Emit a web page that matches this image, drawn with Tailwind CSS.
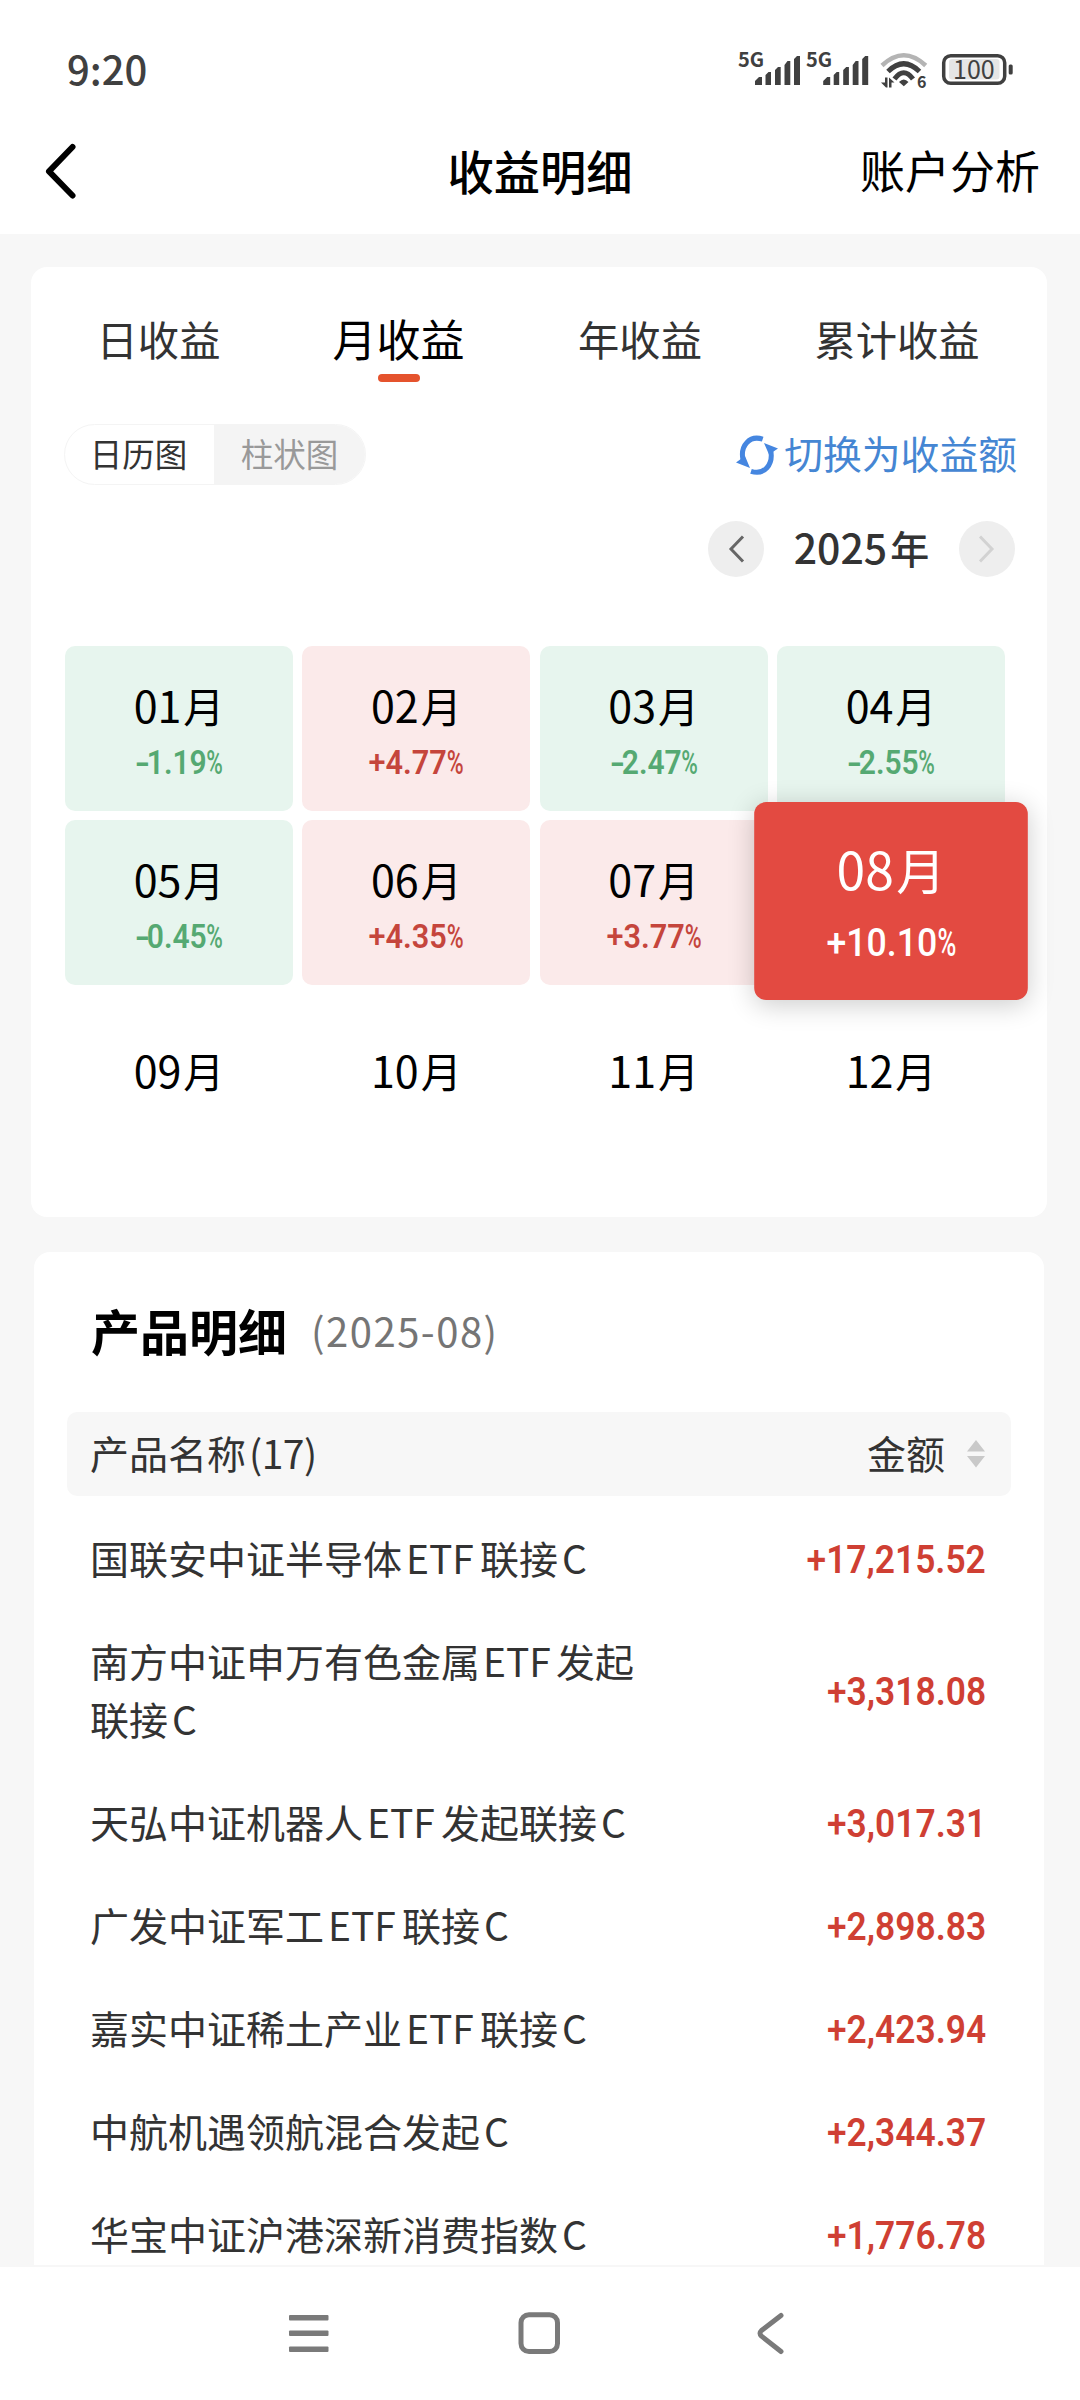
<!DOCTYPE html>
<html lang="zh-CN">

<head>
    <meta charset="UTF-8">
    <meta name="viewport" content="width=device-width, initial-scale=1.0">
    <title>收益明细</title>

    <!-- Include Tailwind CSS -->
    <script src="https://cdn.jsdelivr.net/npm/@tailwindcss/browser@4"></script>
</head>

<body class="w-[1080px] h-[2400px] overflow-hidden bg-[#f7f7f7] flex flex-col text-[#333] font-['Noto_Sans_CJK_SC',sans-serif]">

    <!-- Status Bar -->
    <div class="shrink-0 h-[108px] pt-[32px] pl-[67px] pr-[64px] bg-white flex items-center justify-between text-[#404040]">
        <div class="text-[40px] leading-[60px] font-medium pb-[5px]">9:20</div>
        <svg class="w-[280px] h-[60px] overflow-visible" viewBox="736 40 280 60" fill="#404040">
            <text x="738" y="66.5" font-size="20" font-weight="700" font-family="Noto Sans CJK SC, sans-serif">5G</text>
            <path d="M755 85v-4l4-4h3v8zM765.5 85v-10l3-3h2.5v13zM775 85v-15l3-3h2.7v18zM784.5 85v-20l3-4h2.8v24zM794 85v-26l3-3h3v29z" />
            <text x="806" y="66.5" font-size="20" font-weight="700" font-family="Noto Sans CJK SC, sans-serif">5G</text>
            <path d="M823.2 85v-4l4-4h3v8zM833.7 85v-10l3-3h2.5v13zM843.2 85v-15l3-3h2.7v18zM852.7 85v-20l3-4h2.8v24zM862.2 85v-26l3-3h3v29z" />
            <!-- wifi -->
            <g fill="none">
                <path d="M882 65.500Q903.700 45 925.700 65.500" stroke="#b4b4b4" stroke-width="4.500" />
                <path d="M888 71.500Q903.700 56 919.500 71.500" stroke="#404040" stroke-width="5" />
                <path d="M894.500 79Q903.700 66.500 913 79" stroke="#404040" stroke-width="5" />
            </g>
            <path d="M899 82q4.700-5 9.500 0l-4.700 4.300zM881 82.500h4v-5h2.500v10h-1.500zM889 77.500l5.500 5h-3v5h-2.500z" />
            <text x="917" y="88" font-size="16" font-weight="700" font-family="Noto Sans CJK SC, sans-serif">6</text>
            <!-- battery -->
            <rect x="943.700" y="55.700" width="61" height="27.500" rx="7" fill="none" stroke="#404040" stroke-width="3.500" />
            <rect x="949" y="59" width="50.500" height="20.500" rx="3" fill="#e5e5e5" />
            <text x="953" y="78.700" font-size="25" font-family="Noto Sans CJK SC, sans-serif">100</text>
            <rect x="1008.700" y="64.500" width="4" height="10" rx="1.500" />
        </svg>
    </div>

    <!-- Title Bar -->
    <header class="shrink-0 h-[126px] bg-white grid grid-cols-3 items-center text-black">
        <svg class="ml-[44px] w-[34px] h-[60px]" viewBox="44 141 34 60" fill="none" stroke="#000" stroke-width="6" stroke-linecap="round" stroke-linejoin="round">
            <path d="M72.500 147L49 171.300l23.500 24.200" />
        </svg>
        <h1 class="text-center text-[46.300px] leading-[60px] font-medium pb-[3px]">收益明细</h1>
        <div class="text-right text-[45px] leading-[60px] pr-[40px] pb-[2px]">账户分析</div>
    </header>

    <!-- Profit Calendar -->
    <section class="shrink-0 mt-[33px] ml-[31px] w-[1016px] h-[950px] bg-white rounded-[16px]">
        <!-- Tabs -->
        <div class="flex pl-[9px] pt-[39px] h-[118px] text-[41.300px] leading-[64px] text-center">
            <div class="w-[239px] pr-[2px]">日收益</div>
            <div class="w-[239px] flex flex-col items-center text-[44px] text-black">
                <span>月收益</span>
                <span class="mt-[4px] w-[42px] h-[8px] rounded-full bg-[#e5532d]"></span>
            </div>
            <div class="w-[244px]">年收益</div>
            <div class="w-[270px]">累计收益</div>
        </div>

        <!-- Chart Type + Switch -->
        <div class="flex justify-between items-center mt-[39px] h-[61px] pl-[33px] pr-[30px]">
            <div class="flex w-[302px] h-[61px] rounded-full overflow-hidden border-1 border-[#f4f4f4] text-[32.500px] leading-[55px] text-center">
                <div class="w-[149px] pr-[2px]">日历图</div>
                <div class="flex-1 bg-[#f4f4f4] text-[#999]">柱状图</div>
            </div>
            <div class="flex items-center text-[#4586d3]">
                <svg class="w-[42px] h-[40px] mr-[6px]" viewBox="737 434 42 40" fill="#4586e0">
                    <g fill="none" stroke="#4586e0" stroke-width="5">
                        <path d="M763.700 438.200C751 434 741 444 744 459" />
                        <path d="M752 470.300C765 474.500 775 464 771.500 448" />
                    </g>
                    <path d="M765 442l14 5.500-9 6zM751 467l-14-5.500 9-6.500z" />
                </svg>
                <span class="text-[38.800px] leading-[56px] pb-[6px]">切换为收益额</span>
            </div>
        </div>

        <!-- Year Picker -->
        <div class="flex items-center justify-end mt-[36px] h-[56px] pr-[32px]">
            <button class="w-[56px] h-[56px] rounded-full bg-[#eee] flex items-center justify-center">
                <svg class="w-[18px] h-[28px]" viewBox="0 0 18 28" fill="none" stroke="#666" stroke-width="3">
                    <path d="M16 1.500L4 14l12 12.500" />
                </svg>
            </button>
            <div class="w-[195px] text-center text-[41px] leading-[56px] font-medium pb-[5px]">2025<span class="ml-[3px] text-[39px]">年</span></div>
            <button class="w-[56px] h-[56px] rounded-full bg-[#eee] flex items-center justify-center">
                <svg class="w-[18px] h-[28px]" viewBox="0 0 18 28" fill="none" stroke="#d2d2d2" stroke-width="3">
                    <path d="M2 1.500L14 14 2 26.500" />
                </svg>
            </button>
        </div>

        <!-- Months -->
        <div class="grid grid-cols-4 auto-rows-[165px] gap-x-[9.330px] gap-y-[9px] mt-[69px] ml-[34px] w-[940px] text-center text-black text-[43px] leading-[60px]">
            <div class="rounded-[10px] bg-[#e7f5ee] pt-[28px]">
                <div>01<span class="ml-[2px] text-[41px]">月</span></div>
                <div class="font-['Roboto',sans-serif] text-[33px] leading-[40px] font-semibold text-[#55a972] mt-[8px] pr-[4px] scale-x-[0.91]"><span class="inline-block w-[17px] origin-left scale-x-[1.4]">-</span>1.19<span class="inline-block w-[18px] origin-left scale-x-[0.75] font-medium">%</span></div>
            </div>
            <div class="rounded-[10px] bg-[#fbeaea] pt-[28px]">
                <div>02<span class="ml-[2px] text-[41px]">月</span></div>
                <div class="font-['Roboto',sans-serif] text-[33px] leading-[40px] font-semibold text-[#c5453c] mt-[8px] scale-x-[0.93]"><span class="font-medium">+</span>4.77<span class="inline-block w-[18px] origin-left scale-x-[0.75] font-medium">%</span></div>
            </div>
            <div class="rounded-[10px] bg-[#e7f5ee] pt-[28px]">
                <div>03<span class="ml-[2px] text-[41px]">月</span></div>
                <div class="font-['Roboto',sans-serif] text-[33px] leading-[40px] font-semibold text-[#55a972] mt-[8px] pr-[4px] scale-x-[0.91]"><span class="inline-block w-[17px] origin-left scale-x-[1.4]">-</span>2.47<span class="inline-block w-[18px] origin-left scale-x-[0.75] font-medium">%</span></div>
            </div>
            <div class="rounded-[10px] bg-[#e7f5ee] pt-[28px]">
                <div>04<span class="ml-[2px] text-[41px]">月</span></div>
                <div class="font-['Roboto',sans-serif] text-[33px] leading-[40px] font-semibold text-[#55a972] mt-[8px] pr-[4px] scale-x-[0.91]"><span class="inline-block w-[17px] origin-left scale-x-[1.4]">-</span>2.55<span class="inline-block w-[18px] origin-left scale-x-[0.75] font-medium">%</span></div>
            </div>
            <div class="rounded-[10px] bg-[#e7f5ee] pt-[28px]">
                <div>05<span class="ml-[2px] text-[41px]">月</span></div>
                <div class="font-['Roboto',sans-serif] text-[33px] leading-[40px] font-semibold text-[#55a972] mt-[8px] pr-[4px] scale-x-[0.91]"><span class="inline-block w-[17px] origin-left scale-x-[1.4]">-</span>0.45<span class="inline-block w-[18px] origin-left scale-x-[0.75] font-medium">%</span></div>
            </div>
            <div class="rounded-[10px] bg-[#fbeaea] pt-[28px]">
                <div>06<span class="ml-[2px] text-[41px]">月</span></div>
                <div class="font-['Roboto',sans-serif] text-[33px] leading-[40px] font-semibold text-[#c5453c] mt-[8px] scale-x-[0.93]"><span class="font-medium">+</span>4.35<span class="inline-block w-[18px] origin-left scale-x-[0.75] font-medium">%</span></div>
            </div>
            <div class="rounded-[10px] bg-[#fbeaea] pt-[28px]">
                <div>07<span class="ml-[2px] text-[41px]">月</span></div>
                <div class="font-['Roboto',sans-serif] text-[33px] leading-[40px] font-semibold text-[#c5453c] mt-[8px] scale-x-[0.93]"><span class="font-medium">+</span>3.77<span class="inline-block w-[18px] origin-left scale-x-[0.75] font-medium">%</span></div>
            </div>
            <!-- Selected month -->
            <div class="rounded-[10px] bg-[#e34a41] text-white pt-[24px] scale-120 -translate-y-[1.500px] shadow-[0_4px_22px_rgba(0,0,0,0.2)]">
                <div>08<span class="ml-[2px] text-[41px]">月</span></div>
                <div class="font-['Roboto',sans-serif] text-[33px] leading-[40px] font-medium mt-[12px] scale-x-[0.9]">+10.10<span class="inline-block w-[17px] origin-left scale-x-[0.72] font-medium">%</span></div>
            </div>
            <div class="pt-[45px]">09<span class="ml-[2px] text-[41px]">月</span></div>
            <div class="pt-[45px]">10<span class="ml-[2px] text-[41px]">月</span></div>
            <div class="pt-[45px]">11<span class="ml-[2px] text-[41px]">月</span></div>
            <div class="pt-[45px]">12<span class="ml-[2px] text-[41px]">月</span></div>
        </div>
    </section>

    <!-- Product List -->
    <section class="shrink-0 mt-[35px] ml-[34px] w-[1010px] h-[1013px] bg-white rounded-t-[16px] overflow-hidden">
        <div class="flex items-center h-[160px] pl-[57px] pb-[4px]">
            <h2 class="text-[49px] leading-[70px] font-bold text-black">产品明细</h2>
            <span class="ml-[24px] text-[40px] leading-[70px] tracking-[1.500px] text-[#757575]">(2025-08)</span>
        </div>

        <div class="flex items-center mx-[33px] h-[84px] pl-[23px] pr-[26px] rounded-[10px] bg-[#f7f7f7] text-[39px] leading-[58px]">
            <div class="pb-[4px]">产品名称<span class="ml-[3px] tracking-[-0.500px]">(17)</span></div>
            <div class="ml-auto pb-[4px]">金额</div>
            <svg class="ml-[22px] w-[18px] h-[28px]" viewBox="0 0 18 28" fill="#c9c9c9">
                <path d="M9 0l9 11.500H0zM0 16h18l-9 11.500z" />
            </svg>
        </div>

        <div class="mt-[9px] pl-[56px] pr-[58px] text-[39px] leading-[58px]">
            <div class="flex items-center justify-between py-[22.500px]">
                <div class="w-[560px]">国联安中证半导体<span class="ml-[4px] mr-[6px]">ETF</span>联接<span class="ml-[4px]">C</span></div>
                <div class="font-['Roboto',sans-serif] text-[38px] font-semibold text-[#cf3f33] translate-y-[3px] origin-right scale-x-[0.93]"><span class="font-medium">+</span>17,215.52</div>
            </div>
            <div class="flex items-center justify-between py-[22.500px]">
                <div class="w-[560px]">南方中证申万有色金属<span class="ml-[3px] mr-[5px]">ETF</span>发起联接<span class="ml-[4px]">C</span></div>
                <div class="font-['Roboto',sans-serif] text-[38px] font-semibold text-[#cf3f33] translate-y-[3px] origin-right scale-x-[0.93]"><span class="font-medium">+</span>3,318.08</div>
            </div>
            <div class="flex items-center justify-between py-[22.500px]">
                <div class="w-[560px]">天弘中证机器人<span class="ml-[4px] mr-[6px]">ETF</span>发起联接<span class="ml-[4px]">C</span></div>
                <div class="font-['Roboto',sans-serif] text-[38px] font-semibold text-[#cf3f33] translate-y-[3px] origin-right scale-x-[0.93]"><span class="font-medium">+</span>3,017.31</div>
            </div>
            <div class="flex items-center justify-between py-[22.500px]">
                <div class="w-[560px]">广发中证军工<span class="ml-[4px] mr-[6px]">ETF</span>联接<span class="ml-[4px]">C</span></div>
                <div class="font-['Roboto',sans-serif] text-[38px] font-semibold text-[#cf3f33] translate-y-[3px] origin-right scale-x-[0.93]"><span class="font-medium">+</span>2,898.83</div>
            </div>
            <div class="flex items-center justify-between py-[22.500px]">
                <div class="w-[560px]">嘉实中证稀土产业<span class="ml-[4px] mr-[6px]">ETF</span>联接<span class="ml-[4px]">C</span></div>
                <div class="font-['Roboto',sans-serif] text-[38px] font-semibold text-[#cf3f33] translate-y-[3px] origin-right scale-x-[0.93]"><span class="font-medium">+</span>2,423.94</div>
            </div>
            <div class="flex items-center justify-between py-[22.500px]">
                <div class="w-[560px]">中航机遇领航混合发起<span class="ml-[4px]">C</span></div>
                <div class="font-['Roboto',sans-serif] text-[38px] font-semibold text-[#cf3f33] translate-y-[3px] origin-right scale-x-[0.93]"><span class="font-medium">+</span>2,344.37</div>
            </div>
            <div class="flex items-center justify-between py-[22.500px]">
                <div class="w-[560px]">华宝中证沪港深新消费指数<span class="ml-[4px]">C</span></div>
                <div class="font-['Roboto',sans-serif] text-[38px] font-semibold text-[#cf3f33] translate-y-[3px] origin-right scale-x-[0.93]"><span class="font-medium">+</span>1,776.78</div>
            </div>
        </div>
    </section>

    <!-- Navigation Bar -->
    <nav class="shrink-0 mt-[2px] h-[133px] pr-[2px] bg-white flex justify-center gap-[186px] pt-[44px]">
        <svg class="w-[44px] h-[44px]" viewBox="287 2311 44 44" fill="#7a7a7a">
            <rect x="289" y="2315" width="39.500" height="5.500" rx="1" />
            <rect x="289" y="2330.500" width="39.500" height="5.500" rx="1" />
            <rect x="289" y="2346.500" width="39.500" height="5.500" rx="1" />
        </svg>
        <svg class="w-[44px] h-[44px]" viewBox="517 2311 44 44" fill="none" stroke="#7a7a7a" stroke-width="5">
            <rect x="521" y="2314.700" width="36.500" height="36.800" rx="8" />
        </svg>
        <svg class="w-[44px] h-[44px]" viewBox="747 2311 44 44" fill="none" stroke="#7a7a7a" stroke-width="5" stroke-linecap="round" stroke-linejoin="round">
            <path d="M781 2315.500l-19.500 15q-3 2.800 0 5.600l19.500 15.400" />
        </svg>
    </nav>

</body>

</html>
